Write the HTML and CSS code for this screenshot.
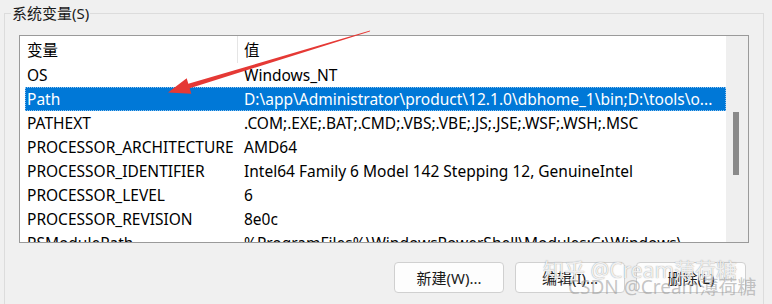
FILE: index.html
```html
<!DOCTYPE html>
<html lang="zh-CN">
<head>
<meta charset="utf-8">
<title>系统变量</title>
<link rel="stylesheet" href="styles.css">
</head>
<body>
<fieldset class="group">
  <legend class="group-title">系统变量(S)</legend>
  <div class="list">
    <div class="list-body">
      <div class="list-header">
        <div class="hcell hcell-name">变量</div>
        <div class="hcell hcell-value">值</div>
      </div>
      <div class="row"><div class="cell">OS</div><div class="cell">Windows_NT</div></div>
      <div class="row selected"><div class="cell">Path</div><div class="cell">D:\app\Administrator\product\12.1.0\dbhome_1\bin;D:\tools\o...</div></div>
      <div class="row"><div class="cell">PATHEXT</div><div class="cell">.COM;.EXE;.BAT;.CMD;.VBS;.VBE;.JS;.JSE;.WSF;.WSH;.MSC</div></div>
      <div class="row"><div class="cell">PROCESSOR_ARCHITECTURE</div><div class="cell">AMD64</div></div>
      <div class="row"><div class="cell">PROCESSOR_IDENTIFIER</div><div class="cell">Intel64 Family 6 Model 142 Stepping 12, GenuineIntel</div></div>
      <div class="row"><div class="cell">PROCESSOR_LEVEL</div><div class="cell">6</div></div>
      <div class="row"><div class="cell">PROCESSOR_REVISION</div><div class="cell">8e0c</div></div>
      <div class="row"><div class="cell">PSModulePath</div><div class="cell">%ProgramFiles%\WindowsPowerShell\Modules;C:\Windows\...</div></div>
    </div>
    <div class="scrollbar"><div class="thumb"></div></div>
  </div>
  <div class="buttons">
    <button class="btn">新建(W)...</button>
    <button class="btn">编辑(I)...</button>
    <button class="btn">删除(L)</button>
  </div>
</fieldset>
<svg class="arrow" width="772" height="304" viewBox="0 0 772 304">
  <polygon class="arrow-shape" points="370.2,30.4 369.8,31.6 189.7,88.2 191.3,93.7 168,92.4 186.7,78.3 188.3,83.8"/>
</svg>
<div class="wm wm-zhihu">知乎 @Cream薄荷糖</div>
<div class="wm wm-csdn">CSDN @Cream薄荷糖</div>
</body>
</html>
```
FILE: styles.css
```css
html, body {
  margin: 0;
}
body {
  position: relative;
  box-sizing: border-box;
  width: 772px;
  height: 304px;
  padding-top: 3px;
  overflow: hidden;
  background: #f0f0f0;
  font-family: "Noto Sans", "Noto Sans CJK SC", sans-serif;
  font-size: 15px;
  color: #000;
}
.group {
  box-sizing: border-box;
  margin: 0 8px 0 4px;
  padding: 0 14px;
  height: 301px;
  min-width: 0;
  border: 1px solid #dcdcdc;
  border-bottom: none;
}
.group-title {
  margin-left: -8px;
  padding: 0 1px;
  line-height: 20px;
  font-size: 15px;
  color: #1a1a1a;
}
.list {
  display: flex;
  margin-top: 12px;
  height: 208px;
  box-sizing: border-box;
  border: 1px solid #9a9a9a;
  background: #fff;
  font-size: 15.5px;
}
.list-body {
  flex: 1;
  min-width: 0;
  overflow: hidden;
}
.list-header {
  display: grid;
  grid-template-columns: 213px 1fr;
  height: 27px;
  margin-left: 5px;
}
.hcell {
  box-sizing: border-box;
  padding-top: 2px;
  line-height: 24px;
  white-space: nowrap;
}
.hcell-name {
  padding-left: 2px;
  border-right: 1px solid #e5e5e5;
}
.hcell-value {
  padding-left: 6px;
}
.row {
  display: grid;
  grid-template-columns: 217px 1fr;
  height: 24px;
  margin-left: 5px;
  line-height: 24px;
  white-space: nowrap;
}
.cell {
  padding-left: 2px;
  overflow: hidden;
}
.row.selected {
  background: #0078d7;
  color: #fff;
  outline: 1px dotted #8fc3ee;
  outline-offset: -1px;
}
.scrollbar {
  width: 22px;
  background: #efefef;
  display: flex;
  flex-direction: column;
}
.thumb {
  margin: 76px 0 0 7px;
  width: 6px;
  height: 63px;
  background: #8a8a8a;
}
.buttons {
  display: flex;
  justify-content: flex-end;
  gap: 11px;
  margin-top: 19px;
  padding-right: 3px;
}
.btn {
  box-sizing: border-box;
  width: 110px;
  height: 31px;
  padding: 0;
  border: 1px solid #d0d0d0;
  border-radius: 4px;
  background: #fdfdfd;
  font-family: "Noto Sans", "Noto Sans CJK SC", sans-serif;
  font-size: 15px;
  color: #1a1a1a;
}
.arrow {
  position: absolute;
  left: 0;
  top: 0;
  pointer-events: none;
}
.arrow-shape {
  fill: #e53935;
}
.wm {
  position: absolute;
  white-space: nowrap;
  font-family: "Noto Sans", "Noto Sans CJK SC", sans-serif;
  pointer-events: none;
}
.wm-zhihu {
  left: 543px;
  top: 254px;
  font-size: 21px;
  color: rgba(255, 255, 255, 0.85);
  text-shadow: 0 0 1px rgba(90, 90, 90, 0.7);
}
.wm-csdn {
  left: 568px;
  top: 272px;
  font-size: 19px;
  color: rgba(150, 150, 150, 0.55);
}
```
